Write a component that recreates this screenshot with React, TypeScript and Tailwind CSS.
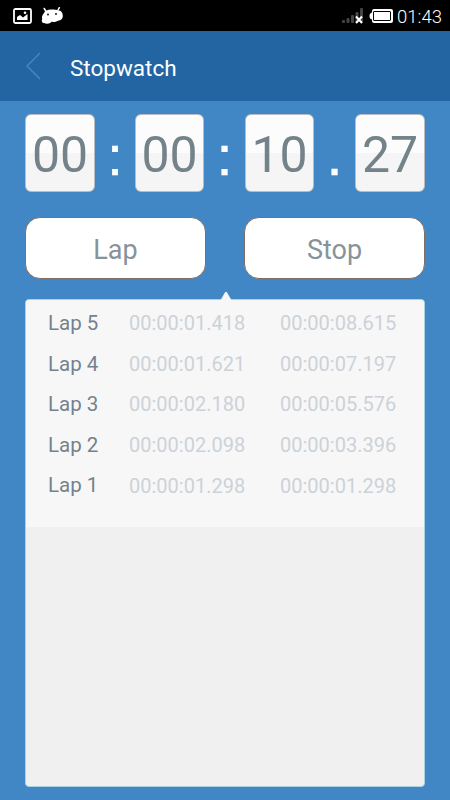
type Lap = {
  name: string;
  split: string;
  total: string;
};

const laps: Lap[] = [
  { name: "Lap 5", split: "00:00:01.418", total: "00:00:08.615" },
  { name: "Lap 4", split: "00:00:01.621", total: "00:00:07.197" },
  { name: "Lap 3", split: "00:00:02.180", total: "00:00:05.576" },
  { name: "Lap 2", split: "00:00:02.098", total: "00:00:03.396" },
  { name: "Lap 1", split: "00:00:01.298", total: "00:00:01.298" },
];

function StatusBar() {
  return (
    <div className="flex h-[31px] items-center bg-black pt-px pr-[6px] pl-[13px] text-white">
      <svg width="19" height="16" viewBox="0 0 19 16" fill="none">
        <rect x="1" y="1" width="17" height="14" rx="1.5" stroke="#fff" strokeWidth="1.8" />
        <path d="M4 12V9l3-2 3 2.5L14.5 6v6z" fill="#fff" />
        <circle cx="12" cy="4.7" r="1.3" fill="#fff" />
      </svg>
      <svg className="ml-[9px]" width="23" height="18" viewBox="0 0 23 18">
        <path
          d="M5 4.5 3.2 1.5M16.8 3.5 18.3 0.7"
          stroke="#fff"
          strokeWidth="1.5"
          strokeLinecap="round"
        />
        <path
          d="M3 6C4.5 3 8 2.5 10.5 2.5c3 0 5.2 0 6.5 1.3C19 3 21.5 5 21.8 8.500c.3 3-2 5-4.800 5.200-2 1.300-4.500 1.300-6.500 1.100C9.500 17 5 17.300 3 16 .8 16 .3 13.500 1.300 12 .3 10 1.500 8 3 6z"
          fill="#fff"
        />
        <circle cx="7" cy="7.5" r="0.9" fill="#000" />
        <circle cx="15" cy="7" r="0.9" fill="#000" />
      </svg>
      <svg className="ml-auto" width="22" height="16" viewBox="0 0 22 16">
        <g fill="#444">
          <rect x="0" y="12" width="3" height="3" rx="1" />
          <rect x="4.5" y="10" width="3" height="5" rx="1" />
          <rect x="9" y="7" width="3" height="8" rx="1" />
          <rect x="13.5" y="4" width="3" height="11" rx="1" />
          <rect x="18" y="0" width="3" height="15" rx="1" />
        </g>
        <path d="m14 8.5 6 6.5m0-6.5-6 6.5" stroke="#fff" strokeWidth="2" />
      </svg>
      <svg className="ml-[5px]" width="25" height="16" viewBox="0 0 25 16">
        <path
          d="M5 1h17q2 0 2 2v10q0 2-2 2H5q-2 0-2-2v-1.500Q.5 11 .5 8T3 4.500V3q0-2 2-2z"
          fill="#fff"
        />
        <rect x="4.5" y="3.5" width="17" height="9" rx="0.5" fill="#fff" stroke="#000" />
      </svg>
      <span className="ml-[3px] w-[47px] pt-[2px] text-[18.5px] leading-none font-light whitespace-nowrap">
        01:43
      </span>
    </div>
  );
}

function Digits({ value }: { value: string }) {
  return (
    <div className="flex h-[78px] items-center justify-center rounded-[6px] border border-[#b9bcc0] bg-linear-to-b from-[#fcfcfc] from-50% to-[#f5f5f5] to-50% pt-[3px] text-[50px] leading-none text-[#74828a]">
      {value}
    </div>
  );
}

function Separator({ value }: { value: string }) {
  return (
    <span className="flex h-[78px] items-center justify-center pt-[5px] font-['Liberation_Sans',sans-serif] text-[56px] leading-none text-white [-webkit-text-stroke:0.6px_white]">
      {value}
    </span>
  );
}

function ActionButton({ label }: { label: string }) {
  return (
    <button className="h-[62px] w-[181px] rounded-[15px] border border-[#7d6f68] bg-white pt-[4px] text-[27px] leading-none text-[#87939a]">
      {label}
    </button>
  );
}

export default function App() {
  return (
    <div className="flex h-[800px] w-[450px] flex-col overflow-hidden bg-[#4287c5] font-[Roboto,sans-serif]">
      <StatusBar />
      <header className="flex h-[70px] items-center bg-[#2265a2] pt-[3px] pl-[26px]">
        <svg className="-mt-[3px]" width="15" height="28" viewBox="0 0 15 28" fill="none">
          <path d="M14 1 1 14l13 13" stroke="#4585c7" strokeWidth="1.5" />
        </svg>
        <h1 className="ml-[29px] pt-[2px] text-[22.5px] leading-none text-white">Stopwatch</h1>
      </header>

      <main className="flex flex-1 flex-col px-[25px] pt-[13px] pb-[13px]">
        <div className="grid grid-cols-[70px_40px_69px_41px_69px_41px_70px]">
          <Digits value="00" />
          <Separator value=":" />
          <Digits value="00" />
          <Separator value=":" />
          <Digits value="10" />
          <Separator value="." />
          <Digits value="27" />
        </div>

        <div className="mt-[25px] flex justify-between">
          <ActionButton label="Lap" />
          <ActionButton label="Stop" />
        </div>

        <div className="relative mt-[20px] flex-1 rounded-[4px] border border-[#a9d3e0] bg-[#f0f0f0]">
          <svg className="absolute -top-[9px] left-[193px]" width="14" height="10" viewBox="0 0 14 10">
            <path d="M1 10 6 1.5Q7 0 8 1.5L13 10z" fill="#f7f7f7" />
          </svg>
          <div className="h-[227px] rounded-t-[3px] bg-[#f7f7f7] pt-[3px] text-[20px]">
            {laps.map((lap) => (
              <div key={lap.name} className="flex h-[40.6px] items-center">
                <span className="w-[103px] pl-[22px] text-[20.5px] text-[#74828e]">{lap.name}</span>
                <span className="w-[151px] text-[#ccd2d7]">{lap.split}</span>
                <span className="text-[#ccd2d7]">{lap.total}</span>
              </div>
            ))}
          </div>
        </div>
      </main>
    </div>
  );
}
